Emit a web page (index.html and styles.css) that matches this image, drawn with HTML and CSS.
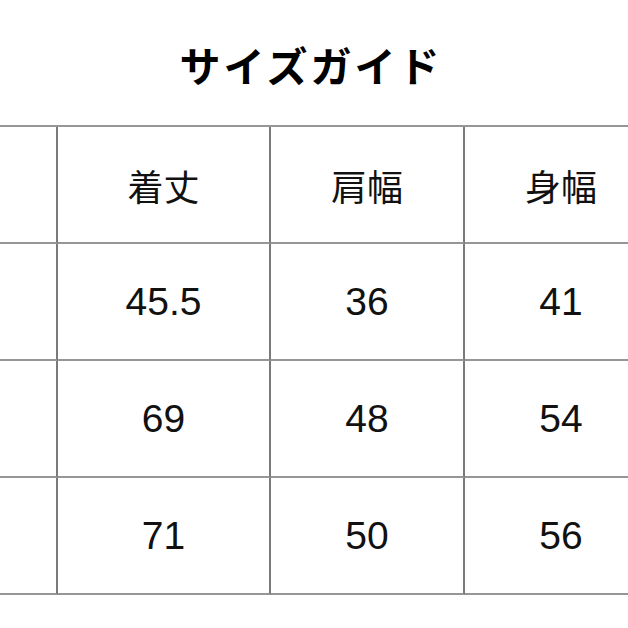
FILE: index.html
```html
<!DOCTYPE html>
<html lang="ja">
<head>
<meta charset="utf-8">
<link rel="stylesheet" href="styles.css">
</head>
<body>
<div class="page">
  <header class="title-bar">
    <h1 class="title">サイズガイド</h1>
  </header>
  <div class="size-grid">
    <div class="cell"></div>
    <div class="cell head">着丈</div>
    <div class="cell head">肩幅</div>
    <div class="cell head">身幅</div>

    <div class="cell"></div>
    <div class="cell num">45.5</div>
    <div class="cell num">36</div>
    <div class="cell num">41</div>

    <div class="cell"></div>
    <div class="cell num">69</div>
    <div class="cell num">48</div>
    <div class="cell num">54</div>

    <div class="cell"></div>
    <div class="cell num">71</div>
    <div class="cell num">50</div>
    <div class="cell num">56</div>
  </div>
</div>
</body>
</html>
```

FILE: styles.css
```css
html, body {
  margin: 0;
  padding: 0;
  background: #ffffff;
}

body {
  width: 628px;
  height: 628px;
  overflow: hidden;
  font-family: "Noto Sans CJK JP", "Liberation Sans", sans-serif;
  color: #111111;
}

.page {
  width: 628px;
  height: 628px;
  overflow: hidden;
}

.title-bar {
  height: 126px;
  display: flex;
  align-items: center;
  justify-content: center;
  padding-top: 2px;
  box-sizing: border-box;
}

.title {
  margin: 0 0 0 -6px;
  font-size: 41px;
  font-weight: 700;
  letter-spacing: 3px;
  line-height: 1;
  color: #000000;
}

.size-grid {
  display: grid;
  grid-template-columns: 150px 213px 194px 194px;
  grid-auto-rows: 117px;
  margin-left: -92px;
  width: 751px;
  border-top: 2px solid #969696;
  margin-top: -1px;
}

.cell {
  box-sizing: border-box;
  border-right: 2px solid #7a7a7a;
  border-bottom: 2px solid #969696;
  display: flex;
  align-items: center;
  justify-content: center;
}

.head {
  font-family: "Noto Sans CJK JP", sans-serif;
  font-size: 36px;
  font-weight: 400;
}

.num {
  font-family: "Liberation Sans", Arial, sans-serif;
  font-size: 39px;
}
```
